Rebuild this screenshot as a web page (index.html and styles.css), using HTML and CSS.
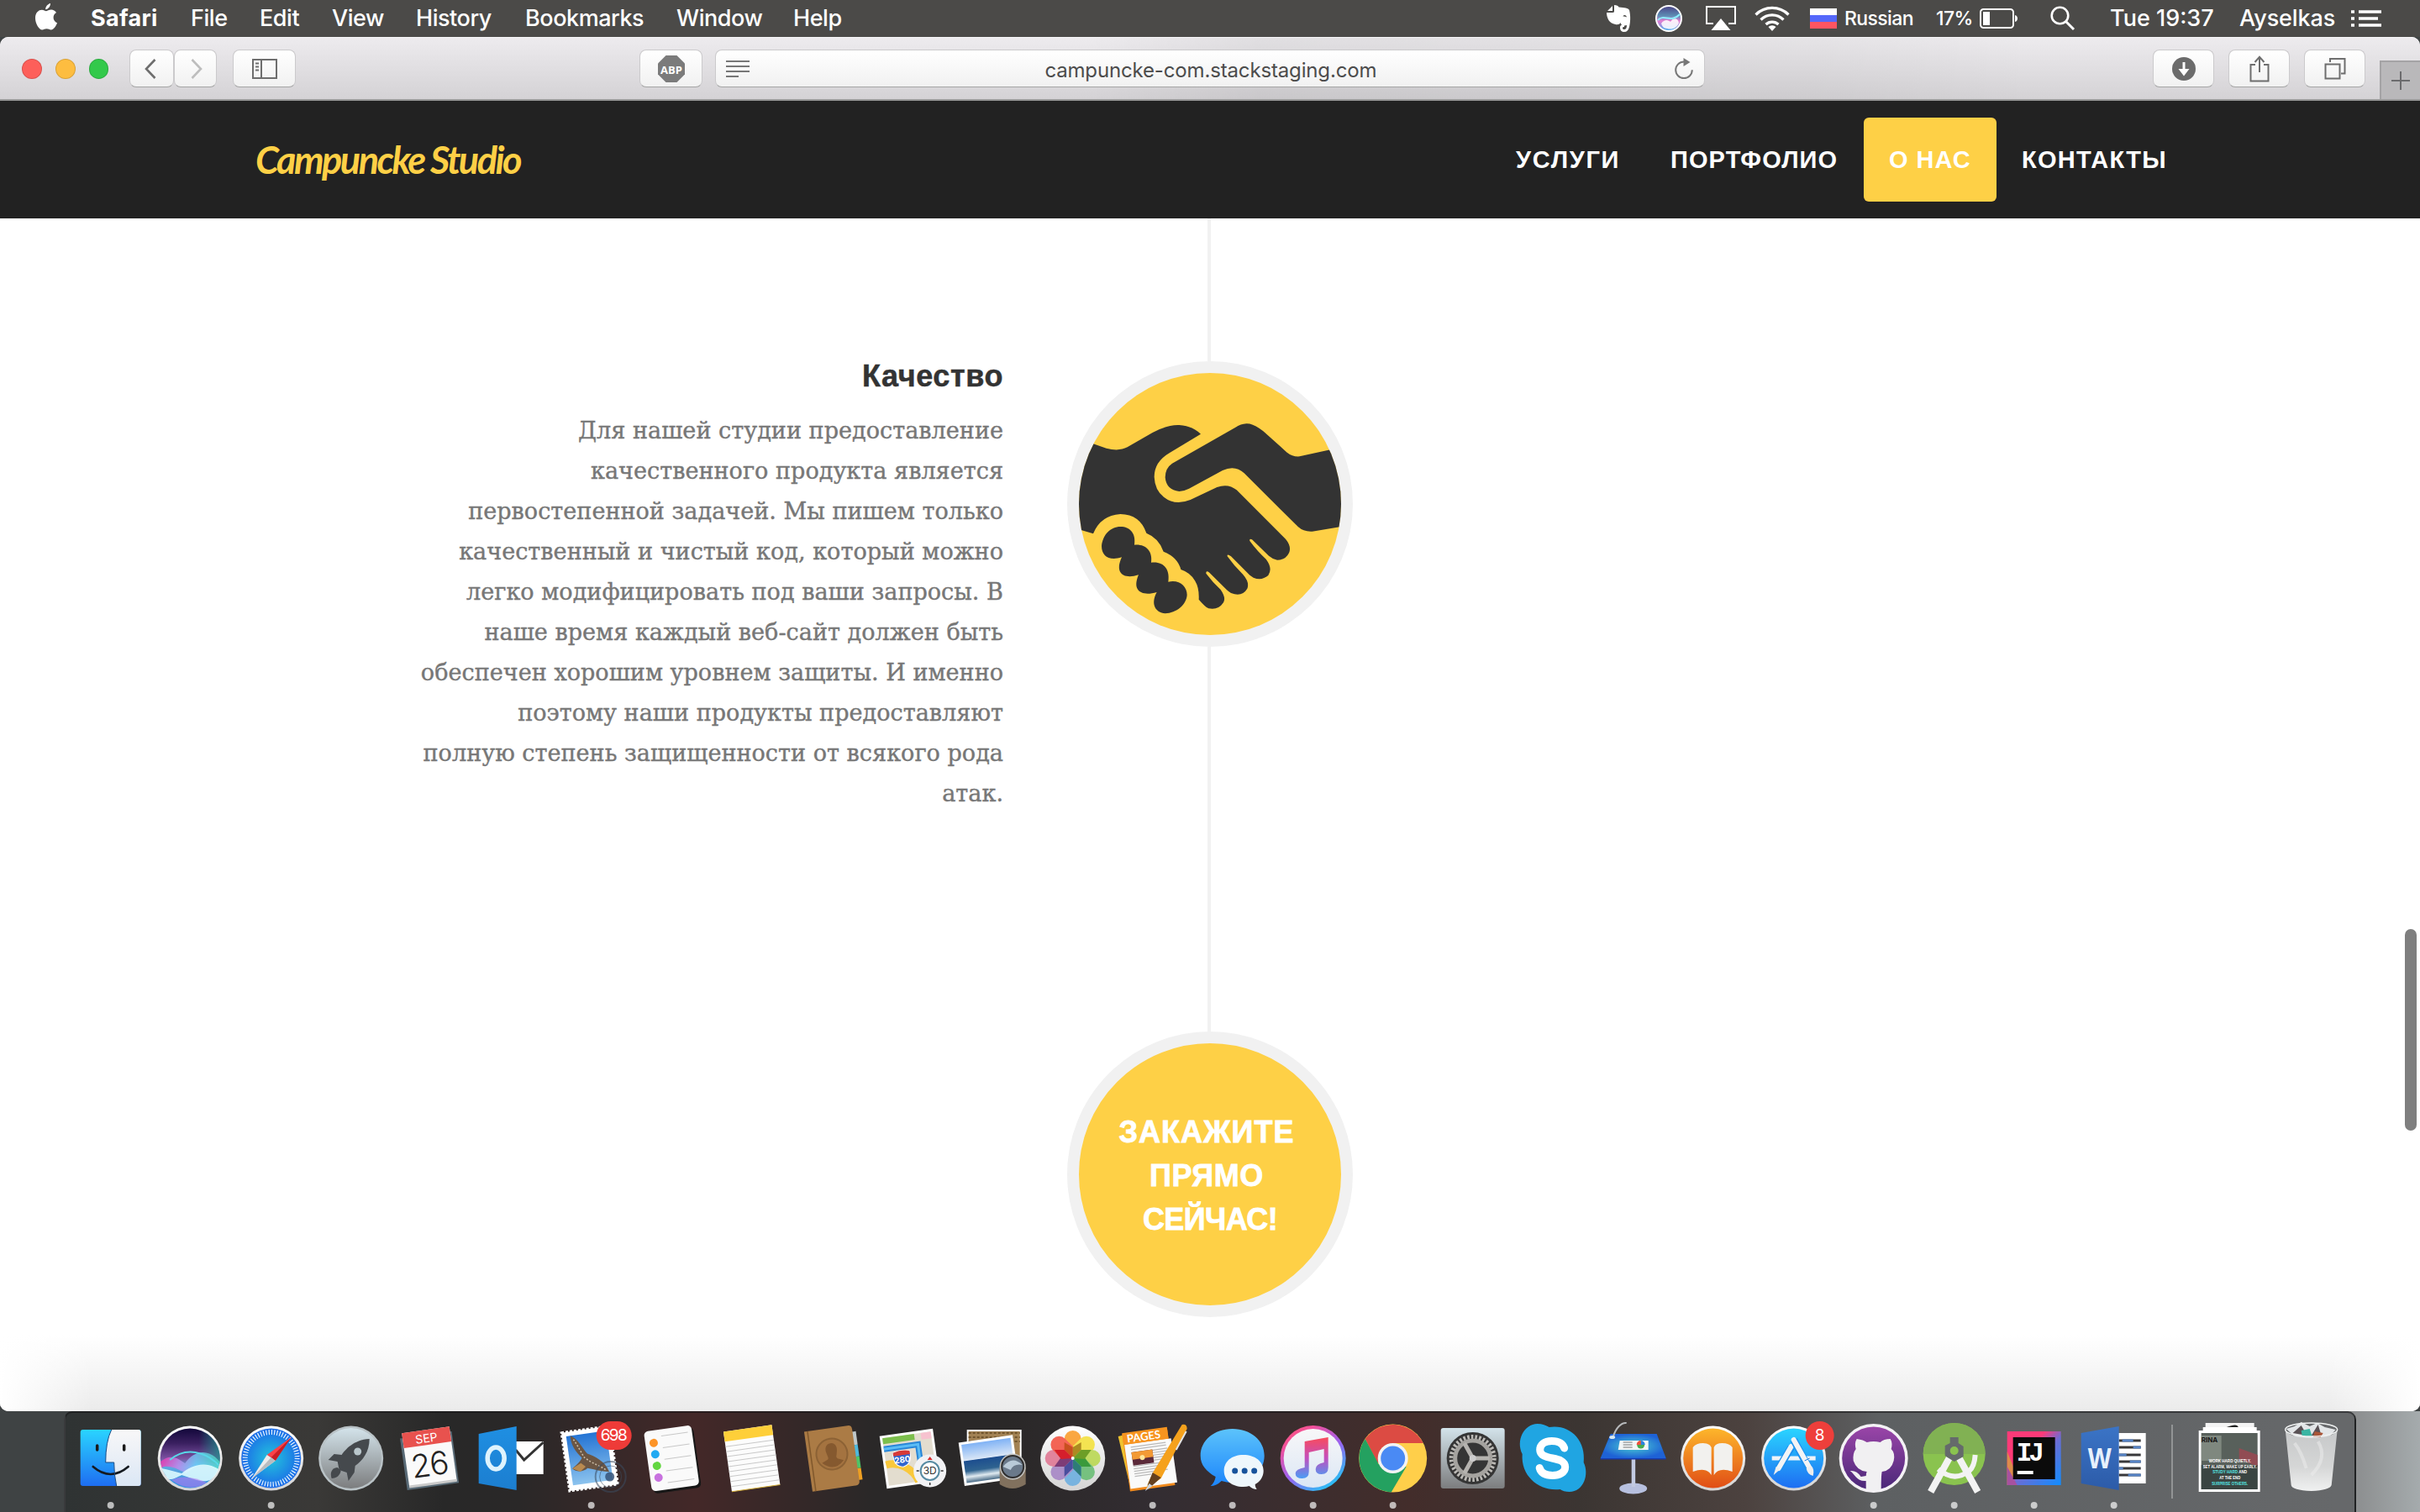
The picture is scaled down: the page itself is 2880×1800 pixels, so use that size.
FILE: index.html
```html
<!DOCTYPE html>
<html lang="ru">
<head>
<meta charset="utf-8">
<title>Campuncke Studio</title>
<link rel="stylesheet" href="styles.css">
</head>
<body>
<header class="menubar">
  <svg class="apple" viewBox="0 0 26 32" width="26" height="32"><path fill="#fff" d="M18 0c.3 3-2.300 7-5.800 7.200C12 4 15 .6 18 0zM13 9.200c1.600 0 3.300-1.600 6-1.600 2.300 0 4.700 1.300 6 3.400-5 3-4.300 10 1 12.200-1.200 3.600-4.200 8.300-7.200 8.300-2 0-2.900-1.200-5.300-1.200-2.400 0-3.400 1.200-5.300 1.200C4.500 31.500 0 24 0 17.500 0 11 4 7.700 7.800 7.700c2.300 0 4 1.500 5.200 1.500z"/></svg>
  <b class="t-safari">Safari</b><span>File</span><span>Edit</span><span>View</span><span>History</span><span>Bookmarks</span><span>Window</span><span>Help</span>
  <svg viewBox="0 0 30 32" width="30" height="32"><path fill="#fff" d="M7 1v6H1zM9 0c3 0 5 1 5.500 2.500C21 3 26 3.500 27 6c2 8 1 16 0 20-1 4-3 6-6 6s-5-2-5-5 2-4 5-4v3c-1.500 0-2 .5-2 1.500s1 1.500 2 1.500c2 0 3-2 3-5-3 1-7 .5-7.500-3-1 2-3 2.500-6 2C3 22 0 15 0 9h7c2 0 2-1 2-2z"/><path fill="#4b4a48" d="M19.500 13.500c1-2 3.500-2 4.500 1-1.500-.7-3-.7-4.500-1z"/></svg>
  <svg viewBox="-17 -17 34 34" width="34" height="34"><defs><linearGradient id="siriMini" x2="0" y2="1"><stop offset="0" stop-color="#4b4185"/><stop offset=".4" stop-color="#5d8fb5"/><stop offset=".6" stop-color="#e77cd2"/><stop offset="1" stop-color="#39aef0"/></linearGradient></defs><circle r="15" fill="url(#siriMini)" stroke="#fff" stroke-width="2"/><path d="M-9 6C-5 0 0 2 2 4 6-2 11 0 12 5 10 11 4 14-2 12-6 12-8 9-9 6z" fill="#fff" opacity=".85"/><path d="M-13 2C-6-6 3 6 13-5" stroke="#8df0ff" fill="none" stroke-width="2"/></svg>
  <svg viewBox="0 0 36 30" width="36" height="30"><path d="M9 21H1V1h34v20h-8" fill="none" stroke="#fff" stroke-width="2"/><path d="M18 15l11.500 14h-23z" fill="#fff"/></svg>
  <svg viewBox="0 0 42 30" width="42" height="30"><g fill="none" stroke="#fff" stroke-width="3.200"><path d="M1.500 10.500a27.500 27.500 0 0 1 39 0"/><path d="M7.500 16.500a19 19 0 0 1 27 0"/><path d="M13.500 22a11 11 0 0 1 15 0"/></g><path d="M21 30l-4.500-5a6.500 6.500 0 0 1 9 0z" fill="#fff"/></svg>
  <span class="flag"></span>
  <span class="t-sm t-lang">Russian</span><span class="t-sm t-pct">17%</span>
  <svg viewBox="0 0 46 24" width="46" height="24"><rect x="1" y="1" width="39" height="22" rx="3.500" fill="none" stroke="#fff" stroke-width="2"/><rect x="4" y="4" width="8" height="16" fill="#fff"/><path d="M42 8c4 1 4 7 0 8z" fill="#fff"/></svg>
  <svg viewBox="0 0 30 30" width="30" height="30"><circle cx="11.500" cy="11.500" r="9.800" fill="none" stroke="#fff" stroke-width="2.600"/><path d="M18.500 18.500L28 28" stroke="#fff" stroke-width="3"/></svg>
  <span class="t-clock">Tue 19:37</span><span class="t-user">Ayselkas</span>
  <svg viewBox="0 0 36 20" width="36" height="20"><path d="M0 2h4M9 2h27M0 10h4M9 10h23M0 18h4M9 18h27" stroke="#fff" stroke-width="3.600"/></svg>
</header>

<main class="window">
  <div class="toolbar">
    <i class="light red"></i><i class="light amber"></i><i class="light green"></i>
    <div class="btn back"><svg viewBox="0 0 14 24" width="14" height="24"><path d="M12.500 1L2 12l10.500 11" fill="none" stroke="#6e6e6e" stroke-width="2.600"/></svg></div>
    <div class="btn fwd"><svg viewBox="0 0 14 24" width="14" height="24"><path d="M1.500 1L12 12 1.500 23" fill="none" stroke="#bdbdbd" stroke-width="2.600"/></svg></div>
    <div class="btn side"><svg viewBox="0 0 30 24" width="30" height="24"><path d="M1 1h28v22H1zM11 1v22" fill="none" stroke="#6e6e6e" stroke-width="2"/><path d="M4 5.500h4M4 9.500h4M4 13.500h4" stroke="#6e6e6e" stroke-width="1.800"/></svg></div>
    <div class="btn abp"><svg viewBox="0 0 32 32" width="32" height="32"><path d="M9.500 0h13L32 9.500v13L22.500 32h-13L0 22.500v-13z" fill="#7b7b7b"/><text x="16" y="21.500" text-anchor="middle" class="abp-text">ABP</text></svg></div>
    <div class="address">
      <svg viewBox="0 0 28 20" width="28" height="20"><path d="M0 1h28M0 7h28M0 13h28M0 19h15" stroke="#777" stroke-width="2"/></svg>
      <span class="url">campuncke-com.stackstaging.com</span>
      <svg viewBox="0 0 24 26" width="24" height="26"><path d="M12 4.500a9.800 9.800 0 1 0 9.800 9.800" fill="none" stroke="#777" stroke-width="2"/><path d="M11.500 0l8 5-8 5z" fill="#777"/></svg>
    </div>
    <div class="btn down"><svg viewBox="0 0 28 28" width="28" height="28"><circle cx="14" cy="14" r="14" fill="#6b6b6b"/><path d="M12.500 6h3v8h5L14 22.500 7.500 14h5z" fill="#fff"/></svg></div>
    <div class="btn share"><svg viewBox="0 0 24 32" width="24" height="32"><path d="M7 11H1.500v19.500h21V11H17M12 20V2M6.500 8L12 1.800 17.500 8" fill="none" stroke="#6e6e6e" stroke-width="2"/></svg></div>
    <div class="btn tabs"><svg viewBox="0 0 26 26" width="26" height="26"><path d="M7 5V1h17.500v17.500H20M1.500 7.500h17v17h-17z" fill="none" stroke="#6e6e6e" stroke-width="2"/></svg></div>
    <div class="newtab"><svg viewBox="0 0 22 22" width="22" height="22"><path d="M11 0v22M0 11h22" stroke="#6b6b6d" stroke-width="2"/></svg></div>
  </div>

  <nav class="sitenav">
    <a class="brand">Campuncke Studio</a>
    <a class="link services">УСЛУГИ</a><a class="link portfolio">ПОРТФОЛИО</a><a class="link active">О НАС</a><a class="link contacts">КОНТАКТЫ</a>
  </nav>

  <section class="timeline">
    <article class="copy">
      <h4>Качество</h4>
      <p>Для нашей студии предоставление<br>качественного продукта является<br>первостепенной задачей. Мы пишем только<br>качественный и чистый код, который можно<br>легко модифицировать под ваши запросы. В<br>наше время каждый веб-сайт должен быть<br>обеспечен хорошим уровнем защиты. И именно<br>поэтому наши продукты предоставляют<br>полную степень защищенности от всякого рода<br>атак.</p>
    </article>
    <div class="axis">
      <div class="stem stem-top"></div>
      <svg class="badge" viewBox="60 60 1020 1020" width="340" height="340">
        <defs><clipPath id="disc"><circle cx="570" cy="570" r="468"/></clipPath></defs>
        <circle cx="570" cy="570" r="510" fill="#f1f1f1"/><circle cx="570" cy="570" r="468" fill="#fed046"/>
        <g clip-path="url(#disc)" fill="#333">
          <path d="M100 340L153 355 200 371Q245 383 275 367L365 315Q420 286 460 288 505 290 537 320L425 388Q371 420 371 473 373 520 405 545 445 577 500 555L595 510Q635 495 665 520L840 695Q862 722 852 745 840 770 810 770 795 768 780 755L720 697Q710 692 712 702 740 740 770 767 795 800 778 825 755 845 725 833L712 824 645 757Q630 746 632 757 655 790 688 822 712 850 703 872 685 903 645 888 635 882 630 877L568 815Q555 805 556 818 580 850 608 876 628 905 618 922 600 950 565 943 555 940 530 911 532 870 517 845 500 815 466 804 455 760 404 740 388 692 343 674 320 607 250 606 180 610 153 676L100 660Z"/>
          <path d="M1045 366L890 400Q865 402 845 386L760 310Q725 282 700 283 680 284 660 297L435 425Q410 442 410 475 414 520 460 525 480 523 495 515L615 450Q660 430 692 460L885 652Q905 670 935 668L1045 650Z"/>
          <path d="M250 651C285 651 306 675 300 716 340 712 366 738 360 779 405 774 428 803 421 848 460 839 488 863 488 895 486 930 450 960 410 961 375 958 357 927 380 885C330 900 289 884 315 823 265 840 227 820 255 760 210 775 183 755 183 720 187 680 215 651 250 651Z"/>
        </g>
      </svg>
      <div class="stem stem-mid"></div>
      <div class="cta"><span class="l1">ЗАКАЖИТЕ</span><span class="l2">ПРЯМО</span><span class="l3">СЕЙЧАС!</span></div>
    </div>
    <div class="scroll"></div>
    <div class="shade"></div>
  </section>
</main>

<footer class="desktop">
<svg class="defs" width="0" height="0"><defs>
  <linearGradient id="gBlue" x2="0" y2="1"><stop offset="0" stop-color="#2ad4ff"/><stop offset="1" stop-color="#1e6ef2"/></linearGradient>
  <linearGradient id="gFace" x2="0" y2="1"><stop offset="0" stop-color="#f8f7f8"/><stop offset="1" stop-color="#dbe7f5"/></linearGradient>
  <linearGradient id="gSiri" x2="0" y2="1"><stop offset="0" stop-color="#12073a"/><stop offset=".25" stop-color="#3a2060"/><stop offset=".5" stop-color="#7a50a0"/><stop offset=".65" stop-color="#5fa8e0"/><stop offset="1" stop-color="#2e8fe0"/></linearGradient>
  <linearGradient id="gTeal"><stop offset=".3" stop-color="#1e8f8a" stop-opacity="0"/><stop offset="1" stop-color="#1e8f8a" stop-opacity=".8"/></linearGradient>
  <linearGradient id="gWave"><stop offset="0" stop-color="#ff2fae"/><stop offset=".3" stop-color="#c98af0"/><stop offset=".6" stop-color="#6fd8ff"/><stop offset="1" stop-color="#4fe0c8"/></linearGradient>
  <linearGradient id="gRing" x2="0" y2="1"><stop offset="0" stop-color="#fff"/><stop offset="1" stop-color="#d4d4d4"/></linearGradient>
  <radialGradient id="gCompass"><stop offset="0" stop-color="#23c5dc"/><stop offset="1" stop-color="#1b6be8"/></radialGradient>
  <linearGradient id="gSteel" x2="0" y2="1"><stop offset="0" stop-color="#d3e3ea"/><stop offset="1" stop-color="#7c7d7e"/></linearGradient>
  <linearGradient id="gOut" x2="0" y2="1"><stop offset="0" stop-color="#1f8fe2"/><stop offset="1" stop-color="#1c7ed0"/></linearGradient>
  <linearGradient id="gSky" x2="0" y2="1"><stop offset="0" stop-color="#2474d4"/><stop offset="1" stop-color="#8cc3ee"/></linearGradient>
  <linearGradient id="gSea" x2="0" y2="1"><stop offset="0" stop-color="#7fb2f5"/><stop offset=".42" stop-color="#d9e6f6"/><stop offset=".44" stop-color="#1d4e8f"/><stop offset=".7" stop-color="#2f6390"/><stop offset=".85" stop-color="#e0eaf0"/><stop offset="1" stop-color="#486a86"/></linearGradient>
  <linearGradient id="gMsg" x2="0" y2="1"><stop offset="0" stop-color="#5cc3fb"/><stop offset="1" stop-color="#1c85fb"/></linearGradient>
  <linearGradient id="gTunes" x2=".7" y2="1"><stop offset="0" stop-color="#fb5b6b"/><stop offset=".25" stop-color="#f2509c"/><stop offset=".6" stop-color="#9a62f0"/><stop offset="1" stop-color="#25c3f5"/></linearGradient>
  <linearGradient id="gNote" x2="0" y2="1"><stop offset="0" stop-color="#f94b5b"/><stop offset=".5" stop-color="#c44fbd"/><stop offset="1" stop-color="#4a9cf5"/></linearGradient>
  <linearGradient id="gBook" x2="0" y2="1"><stop offset="0" stop-color="#fdb62b"/><stop offset="1" stop-color="#e04d16"/></linearGradient>
  <linearGradient id="gGit" x2="0" y2="1"><stop offset="0" stop-color="#9a45a8"/><stop offset="1" stop-color="#4a2878"/></linearGradient>
  <linearGradient id="gWord" x2="0" y2="1"><stop offset="0" stop-color="#3b74c6"/><stop offset="1" stop-color="#2c5ba8"/></linearGradient>
  <linearGradient id="gIj" x2="1" y2="1"><stop offset="0" stop-color="#fd3a78"/><stop offset=".35" stop-color="#fd3a78"/><stop offset=".55" stop-color="#6b6dd5"/><stop offset="1" stop-color="#0f8dff"/></linearGradient>
  <linearGradient id="gBin" x2="0" y2="1"><stop offset="0" stop-color="#c6c8c9"/><stop offset=".6" stop-color="#d5d6d6"/><stop offset="1" stop-color="#f0f1f1"/></linearGradient>
  <radialGradient id="gDesk"><stop offset="0" stop-color="#4bd0d2"/><stop offset="1" stop-color="#1e62d6"/></radialGradient>
</defs></svg>
<div class="dock">
  <svg class="app" viewBox="-47.680 -56 95.360 120"><rect x="-36" y="-34" width="72" height="67" rx="3" fill="url(#gBlue)"/><path d="M1-34h32a3 3 0 0 1 3 3v61a3 3 0 0 1-3 3H7Q4 20 4 5H-6Q-6-20 1-34z" fill="url(#gFace)"/><path d="M-16-15v5M16-15v5" stroke="#1a1a1a" stroke-width="3.500" stroke-linecap="round"/><path d="M-21 10Q0 28 21 10" fill="none" stroke="#151a20" stroke-width="2.600" stroke-linecap="round"/><path d="M1-34Q-6-20-6 5H4q0 15 3 28" fill="none" stroke="#174a86" stroke-width="1"/><circle cy="56" r="4" class="run"/></svg>
  <svg class="app" viewBox="-47.680 -56 95.360 120"><g transform="translate(-1.500 0)"><circle r="38.500" fill="url(#gRing)"/><circle r="35.500" fill="url(#gSiri)"/><path d="M0-35.500A35.500 35.500 0 0 1 35 7L0 0z" fill="url(#gTeal)"/><path d="M-35 4C-24-6-14 0-6 6 8-14 26-8 35 4 34 10 34 12 32 15 18 4 8 8-5 18-18 10-28 8-34 11z" fill="url(#gWave)" opacity=".75"/><path d="M-34 12C-24 14-18 16-10 18 0 10 16 2 34 13 32 19 28 23 24 26 12 30 4 24-10 20-18 24-26 28-28 22z" fill="#e4ffff" opacity=".85"/><path d="M-22 26C-10 20 4 22 20 29Q0 42-22 26z" fill="#b27af0" opacity=".6"/><path d="M-24 2C-5-14 18-8 34 8" stroke="#58d8e8" stroke-width="2" fill="none"/></g></svg>
  <svg class="app" viewBox="-47.680 -56 95.360 120"><circle r="38.500" fill="url(#gRing)"/><circle r="35.500" fill="url(#gCompass)"/><circle r="31" fill="none" stroke="#e6f2ff" stroke-width="6" stroke-dasharray="1.200 2.046"/><path d="M24-25L5 3-5-4z" fill="#fb4248"/><path d="M24-25L5 3 0-1z" fill="#c81e26"/><path d="M-23 24L-5-4 5 3z" fill="#ececec"/><path d="M-23 24L0-1 5 3z" fill="#b9bcc0"/><circle cy="56" r="4" class="run"/></svg>
  <svg class="app" viewBox="-47.680 -56 95.360 120"><circle r="38.500" fill="#b9c2c6"/><circle r="36" fill="url(#gSteel)"/><path d="M22-23C3-22-7-10-11-4L-20-5-27 2-16 4-14 14-5 17-3 27 4 17 5 9C14 3 22-8 22-23z" fill="#45494d"/><path d="M-16 11C-24 12-25 18-23 24-17 24-13 20-12 15z" fill="#45494d"/><circle cx="8" cy="-8" r="4.500" fill="#b9c6cb"/></svg>
  <svg class="app" viewBox="-47.680 -56 95.360 120"><g transform="translate(-3 0) rotate(-8)"><path d="M-31-28h62v62h-62z" fill="#586a76"/><path d="M-28-34h57v65h-57z" fill="#fafafa"/><path d="M-28-34h57v18h-57z" fill="#e8524e"/><text y="-19" text-anchor="middle" class="cal-m">SEP</text><text y="21" text-anchor="middle" class="cal-d" textLength="45">26</text><path d="M-28 29h57v3h-57z" fill="#c9c9c9"/></g></svg>
  <svg class="app" viewBox="-47.680 -56 95.360 120"><path d="M0-20h38v39H0z" fill="#fff"/><path d="M5-10L15 2 38-19" stroke="#333" stroke-width="3" fill="none"/><path d="M-39-29L6-38V38l-45-8z" fill="url(#gOut)"/><ellipse cx="-18.500" rx="10" ry="13" fill="none" stroke="#def3fd" stroke-width="5.500"/></svg>
  <svg class="app" viewBox="-47.680 -56 95.360 120"><g transform="rotate(-8)"><path d="M-31-35h58v70h-58z" fill="#fff" stroke="#fff" stroke-width="3" stroke-dasharray="3 2"/><path d="M-26-30h48v59h-48z" fill="url(#gSky)"/><path d="M-21-30C-13-26-9-14-4-6 4-2 16 6 19 19 10 17 2 14-6 11-12 15-20 14-24 9-18 5-14 3-11-2-18-11-22-20-21-30z" fill="#6b5644"/><path d="M-18-25C-14-18-11-8-8-2 1 7 9 10 15 16" stroke="#cdbfa9" stroke-width="1.500" stroke-dasharray="2 2" fill="none"/><path d="M-24 9l11-5 5 5-7 5z" fill="#b98a50"/></g><g fill="none" stroke="#3b4c60" opacity=".55"><circle cx="23" cy="22" r="18" stroke-width="2"/><circle cx="23" cy="22" r="13"/></g><circle cx="22" cy="22" r="5.500" fill="#2f4c72" opacity=".8"/><rect x="6" y="-44" width="42" height="34" rx="17" fill="#ee3b38"/><text x="27" y="-21" text-anchor="middle" class="count" textLength="32">698</text><circle cy="56" r="4" class="run"/></svg>
  <svg class="app" viewBox="-47.680 -56 95.360 120"><g transform="rotate(-8)"><rect x="-27" y="-33" width="57" height="72" rx="5" fill="#171717"/><rect x="-29" y="-36" width="57" height="72" rx="5" fill="#fafafa"/><path d="M-9-28h32M-9-14h32M-9 0h32M-9 14h32M-9 28h32" stroke="#c8c8c8" stroke-width="1"/><g><circle cx="-19" cy="-21" r="5" fill="#fd9427"/><circle cx="-19" cy="-7.500" r="5" fill="#22aaf2"/><circle cx="-19" cy="6.500" r="5" fill="#63d641"/><circle cx="-19" cy="20.500" r="5" fill="#c872df"/></g></g></svg>
  <svg class="app" viewBox="-47.680 -56 95.360 120"><g transform="rotate(-8)"><path d="M-29-36h58v72h-58z" fill="#fcfcfc"/><path d="M-29-36h58v12h-58z" fill="#fecf39"/><path d="M-29-18h58M-29-12h58M-29-6h58M-29 0h58M-29 6h58M-29 12h58M-29 18h58M-29 24h58M-29 30h58" stroke="#c9c9c9"/><path d="M-29 36h58" stroke="#d0ab38"/></g></svg>
  <svg class="app" viewBox="-47.680 -56 95.360 120"><g transform="rotate(-8)"><path d="M25-28h7v16h-7z" fill="#bfc7c8"/><path d="M25-12h7V2h-7z" fill="#4eb9dd"/><path d="M25 2h7v14h-7z" fill="#4fc467"/><path d="M25 16h7v14h-7z" fill="#efa022"/><path d="M-29-36h52q5 0 5 5v62q0 5-5 5h-52z" fill="#ab7b45"/><path d="M-25-36v72" stroke="#80582c" stroke-width="1.500"/><circle cy="-5" r="18.500" fill="#a47340" stroke="#8c6235" stroke-width="2"/><path d="M0-18c6 0 8 6 6 12-1 5-2 5 0 7l7 3Q0 17-13 4l7-3c2-2 1-2 0-7-2-6 0-12 6-12z" fill="#85592f"/></g></svg>
  <svg class="app" viewBox="-47.680 -56 95.360 120"><g transform="translate(-3 0) rotate(-8)"><path d="M-32-31h64v63h-64z" fill="#fff"/><path d="M-29-28h58v57h-58z" fill="#e3ddcf"/><path d="M-29-28h38v7h-38z" fill="#7cbf4c"/><path d="M17-28h12v8H17z" fill="#f7c2cf"/><path d="M-29-15h41v30" stroke="#2886d8" stroke-width="7" fill="none"/><path d="M-29-15h41v30" stroke="#5bbcf5" stroke-width="3" fill="none"/><path d="M-29 4C-14 2 2 12 7 29" stroke="#f9c83c" stroke-width="9" fill="none"/><path d="M-19-9Q-9-12 1-9 3 7-9 9-21 7-19-9z" fill="#3065cf" stroke="#fff"/><path d="M-19-9Q-9-12 1-9v4h-20z" fill="#d73937"/><text x="-9" y="4" text-anchor="middle" class="route">280</text></g><circle cx="21" cy="15" r="19.500" fill="#f2f2f4"/><circle cx="21" cy="15" r="11" fill="#fff" stroke="#568ba2" stroke-width="2"/><path d="M21-2l3 4h-6z" fill="#d92b2b"/><path d="M5 15h3M34 15h3M21 29v3" stroke="#333" stroke-width="1.500"/><text x="21" y="19" text-anchor="middle" class="three">3D</text></svg>
  <svg class="app" viewBox="-47.680 -56 95.360 120"><path d="M-30-34h65v50h-65z" fill="#fff"/><path d="M-28-32h61v46h-61z" fill="#a28254"/><path d="M-28-30h61M-28-25h61M-28-20h61" stroke="#71562f" stroke-dasharray="3 2" stroke-width="2"/><g transform="rotate(-8)"><path d="M-37-24h65v52h-65z" fill="#fff"/><path d="M-34-21h59v46h-59z" fill="url(#gSea)"/></g><path d="M9 11v20q15 10 31 0V11z" fill="#81715e"/><circle cx="24.500" cy="10" r="15.500" fill="#c3c3c0"/><circle cx="24.500" cy="10" r="13" fill="#6a798a" stroke="#2f2f2f" stroke-width="2"/><path d="M13 10Q24-4 36 8q-10-2-14 6z" fill="#b9cad8"/></svg>
  <svg class="app" viewBox="-47.680 -56 95.360 120"><circle r="38.500" fill="url(#gRing)"/><g opacity=".87"><rect x="-10" y="-33" width="20" height="33" rx="10" fill="#fb9b27"/><rect x="-10" y="-33" width="20" height="33" rx="10" fill="#f4e13a" transform="rotate(45)"/><rect x="-10" y="-33" width="20" height="33" rx="10" fill="#b9d84e" transform="rotate(90)"/><rect x="-10" y="-33" width="20" height="33" rx="10" fill="#67bd72" transform="rotate(135)"/><rect x="-10" y="-33" width="20" height="33" rx="10" fill="#6aaee0" transform="rotate(180)"/><rect x="-10" y="-33" width="20" height="33" rx="10" fill="#a584c5" transform="rotate(225)"/><rect x="-10" y="-33" width="20" height="33" rx="10" fill="#e07592" transform="rotate(270)"/><rect x="-10" y="-33" width="20" height="33" rx="10" fill="#f3503f" transform="rotate(315)"/></g><g><path d="M0 0l-10-10v-9l10 6z" fill="#c8501f"/><path d="M0 0l10-10v-9L0-13z" fill="#ad8a22"/><path d="M0 0l14-1 8 11H10z" fill="#3a9a3b"/><path d="M0 0l10 10v12L0 12z" fill="#2e7c78"/><path d="M0 0l-10 10v12L0 12z" fill="#4a4e9d"/><path d="M0 0l-14-1-8 11h12z" fill="#7e3c77"/><path d="M0 0l-14 1-8-11h12z" fill="#d51f2c"/><path d="M0 0l14 1 8-11H10z" fill="#6d9e27"/></g><circle r="2" fill="#fff"/></svg>
  <svg class="app" viewBox="-47.680 -56 95.360 120"><path d="M-41-26l8-2 12 63-5 2z" fill="#f0c22e"/><g transform="translate(-4 0) rotate(-8)"><path d="M-28-33h54v69h-54z" fill="#f08a1d"/><path d="M-27-20h56v53h-56z" fill="#fafafa"/><path d="M-28-34h54v14h-54z" fill="#f7941f"/><text x="-3" y="-22" text-anchor="middle" class="pages">PAGES</text><path d="M-20-16h42M-20-13h42M4-9h19M4-6h19M4-3h19M4 0h19M4 3h19M-20 7h42M-20 10h42M-20 13h36M-20 16h40M-20 19h20" stroke="#b9b9b9" stroke-width="1.200"/><path d="M-20-10H5V6h-25z" fill="#5b2a3a"/><path d="M-20-10H5v9h-25z" fill="#f39a35"/><circle cx="-8" cy="-2" r="3" fill="#ffe69a"/></g><path d="M35-40q6-1 6 5L10 24-3 33-8 38-5 29 1 16z" fill="#f5a11c"/><path d="M0 17l10 6-12 11-4-2z" fill="#65401f"/><path d="M40-32L28-10" stroke="#e5e5e5" stroke-width="2"/><path d="M-9 39l5-9 4 3z" fill="#ccd5df"/><circle cy="56" r="4" class="run"/></svg>
  <svg class="app" viewBox="-47.680 -56 95.360 120"><path d="M0-35C22-35 38-21 38-3S22 29 0 29q-7 0-13-2-6 6-13 6 5-4 6-11C-31 16-38 8-38-3-38-21-22-35 0-35z" fill="url(#gMsg)"/><path d="M13-4c14 0 24 8 24 19 0 7-4 13-10 16 0 3 1 4 2 6q-5 0-9-4-3 1-7 1c-14 0-23-8-23-19S-1-4 13-4z" fill="#eff7fc"/><g fill="#18539c"><circle cx="3" cy="15" r="3.500"/><circle cx="14.500" cy="15" r="3.500"/><circle cx="26" cy="15" r="3.500"/></g><circle cy="56" r="4" class="run"/></svg>
  <svg class="app" viewBox="-47.680 -56 95.360 120"><circle r="39" fill="url(#gTunes)"/><circle r="35" fill="url(#gFace)"/><path d="M-10-20L18-25V11q0 8-8 8-7 0-7-6t10-8v-16l-18 4v23q0 8-8 8-8 0-8-6 0-5 11-7z" fill="url(#gNote)"/><circle cy="56" r="4" class="run"/></svg>
  <svg class="app" viewBox="-47.680 -56 95.360 120"><circle r="40.500" fill="#ffcf4a"/><path d="M-33-23A40.500 40.500 0 0 1 36-18H0L-18 6z" fill="#dc4b43"/><path d="M-33-23A40.500 40.500 0 0 0-2 40.500L16 10-17 7z" fill="#24a160"/><circle r="18" fill="#f3f3f3"/><circle r="14.500" fill="#4a8af4"/><circle cy="56" r="4" class="run"/></svg>
  <svg class="app" viewBox="-47.680 -56 95.360 120"><rect x="-38" y="-36" width="76" height="72" rx="3" fill="url(#gSteel)"/><circle r="31" fill="#353535"/><circle r="25.500" fill="none" stroke="#bcbab6" stroke-width="5" stroke-dasharray="2.600 2.100"/><circle r="21" fill="none" stroke="#a5a39f" stroke-width="5"/><path d="M0 0h20M0 0l-10-18M0 0l-10 18" stroke="#b5b3af" stroke-width="5"/><circle r="4" fill="#ccc"/></svg>
  <svg class="app" viewBox="-46.680 -56 95.360 120"><path d="M-18-41c6 0 10 2 14 4C20-41 40-22 37 5c7 14 0 35-17 35q-7 0-11-3C-15 40-38 22-36-5-44-21-34-41-18-41z" fill="#20a5e2"/><path d="M14-12C12-18 6-20.500-1-20.500-10-20.500-15-16-15-10-15 4 15-4 15 10.500 15 17 8 20.500 0 20.500-9 20.500-14 17-15.500 11.500" fill="none" stroke="#fff" stroke-width="9" stroke-linecap="round"/></svg>
  <svg class="app" viewBox="-47.680 -56 95.360 120"><ellipse cy="36" rx="16.500" ry="6.500" fill="#b7c0df"/><path d="M-2 0h4.500v34H-2z" fill="#c2cae2"/><path d="M-27-29h55L39 0h-78z" fill="url(#gDesk)"/><path d="M-39 0h78v1.500h-78z" fill="#173bb0"/><path d="M-16-21h34v11h-36z" fill="#f2f5f6"/><path d="M-12-19h11M-12-16h11M-12-13h11" stroke="#777"/><circle cx="9" cy="-16" r="4.500" fill="#45ab50"/><path d="M9-16v-5a5 5 0 0 1 5 5z" fill="#2b82e0"/><path d="M9-16v-5a5 5 0 0 0-5 5z" fill="#f1503d"/><path d="M-24-25C-21-36-14-43-8-42" stroke="#b7b9bb" stroke-width="2" fill="none"/><ellipse cx="-25" cy="-25" rx="3.500" ry="2" fill="#d8e8f0"/></svg>
  <svg class="app" viewBox="-46.680 -56 95.360 120"><circle r="38.500" fill="url(#gRing)"/><circle r="35.500" fill="url(#gBook)"/><path d="M-2 20V-13Q-4-18-12-18-20-18-24-13V16Q-8 10-2 20zM1 20V-13Q3-18 11-18 19-18 23-13V16Q7 10 1 20z" fill="#f2f1ee"/></svg>
  <svg class="app" viewBox="-47.680 -56 95.360 120"><circle r="38.500" fill="url(#gRing)"/><circle r="35.500" fill="url(#gBlue)"/><path d="M-26 0h52" stroke="#eef3f8" stroke-width="5"/><path d="M-3-13L-18 12" stroke="#1e90ee" stroke-width="9"/><path d="M-3-14L-18 12" stroke="#f2f4f6" stroke-width="6" stroke-linecap="round"/><path d="M-21 10l5 3-8 7z" fill="#eee"/><path d="M0-22L18 12" stroke="#1e90ee" stroke-width="9"/><path d="M0-22L18 10" stroke="#f2f4f6" stroke-width="6" stroke-linecap="round"/><path d="M15 12l6-3q4 4 2 12-7-2-8-9z" fill="#eee"/><path d="M13 3l6-3" stroke="#1e80e8"/><circle cx="31" cy="-27" r="17" fill="#ee3f3b"/><text x="31" y="-21" text-anchor="middle" class="count">8</text></svg>
  <svg class="app" viewBox="-47.680 -56 95.360 120"><circle r="41" fill="#f4f2f5"/><circle r="37.500" fill="url(#gGit)"/><path d="M-20-23q8 1 12 4Q0-21 8-19q4-4 12-4 3 5 1 12 5 5 3 14Q21 15 10 16q-1 4-1 21Q0 40-9 37V27C-20 28-22 19-28 15q8-1 13 7l6-1q0-3 1-5Q-20 15-24 3q-1-9 3-14-2-7 1-12z" fill="#f1f0f2"/><circle cy="56" r="4" class="run"/></svg>
  <svg class="app" viewBox="-47.680 -56 95.360 120"><circle cy="-5" r="37" fill="#8ac34f"/><path d="M-37-5A37 37 0 0 1 37-5z" fill="#81b153"/><path d="M-6 0L-28 40M6 0L28 40" stroke="#f3f3f3" stroke-width="8"/><path d="M-19 13Q0 29 18 15 24 10 25-4" stroke="#f3f3f3" stroke-width="6" fill="none"/><path d="M-5-25H5v7l6 4v12L0 4-11-3v-12l6-3z" fill="#656a6b"/><circle cy="-9" r="5" fill="#8ac34f"/><circle cy="56" r="4" class="run"/></svg>
  <svg class="app" viewBox="-47.680 -56 95.360 120"><path d="M-32-32h64v64h-64z" fill="url(#gIj)"/><path d="M-32-8l8 20v20h-8z" fill="#dd8b4b"/><path d="M-32 10l12 22h-12z" fill="#a751a0"/><path d="M-25-25h50v50h-50z" fill="#0b0b0b"/><text x="-21" y="3" class="ij">IJ</text><path d="M-20 15h19v4h-19z" fill="#fff"/><circle cy="56" r="4" class="run"/></svg>
  <svg class="app" viewBox="-47.680 -56 95.360 120"><path d="M0-30h38v60H0z" fill="#fff"/><path d="M6-21h26M6-13h26M6-4h26M6 4h26M6 12h26M6 20h26" stroke="#38383a" stroke-width="3"/><path d="M10-21h13M23-13h9M6-4h9M19 4h13M6 12h5M17 20h15" stroke="#5683c5" stroke-width="3"/><path d="M-39-30L6-38V38l-45-8z" fill="url(#gWord)"/><text x="-17" y="12" text-anchor="middle" class="word" textLength="28" lengthAdjust="spacingAndGlyphs">W</text><circle cy="56" r="4" class="run"/></svg>
  <i class="rule"></i>
  <svg class="app" viewBox="-47.680 -56 95.360 120"><path d="M-29-42h58v12h-58z" fill="#f4f4f4"/><path d="M-4-37q13-5 14 0z" fill="#222"/><path d="M-32-37h64v8h-64z" fill="#fff"/><path d="M-37-33h73v73h-73z" fill="#fff"/><path d="M-34-30h67v67h-67z" fill="#58605b"/><path d="M-34-27h24v30h-24z" fill="#9aa398" opacity=".6"/><path d="M11-12l22 8v14l-22-9z" fill="#914c53"/><path d="M-34 8h67v29h-67z" fill="#303c3a" opacity=".75"/><text x="-34" y="-19" class="rina">RINA</text><g class="poster"><text y="5" text-anchor="middle" textLength="50" lengthAdjust="spacingAndGlyphs">WORK HARD QUIETLY.</text><text y="11.700" text-anchor="middle" textLength="64" lengthAdjust="spacingAndGlyphs">SET ALARM, WAKE UP EARLY.</text><text y="18.400" text-anchor="middle" textLength="41" lengthAdjust="spacingAndGlyphs"><tspan fill="#54e5e2">STUDY HARD</tspan> AND</text><text y="25.100" text-anchor="middle" textLength="25" lengthAdjust="spacingAndGlyphs">AT THE END</text><text y="31.800" text-anchor="middle" textLength="43" lengthAdjust="spacingAndGlyphs" fill="#54e5e2">SURPRISE OTHERS.</text></g></svg>
  <svg class="app" viewBox="-48.680 -56 95.360 120"><path d="M-30-35L-20-38-12-43-2-38 7-42 16-37 29-34 20-24H-18z" fill="#e3e6e8"/><path d="M-22-30l10-9 7 12zM0-27l8-13 4 13z" fill="#5a5256"/><path d="M-12-33l10-2 3 9h-12z" fill="#39b5a3"/><path d="M4-32l10 2-3 5h-9z" fill="#a95638"/><path d="M-31-34L-24 32q1 6 24 7 22-1 24-7L31-34Q28-25 0-24-28-25-31-34z" fill="url(#gBin)"/><ellipse cy="-34" rx="31" ry="8" fill="none" stroke="#eef0f0" stroke-width="1.500"/><path d="M-20-18q8 10 14 30M8-20Q20 0 0 20" stroke="#eee" stroke-width="4" fill="none" opacity=".5"/></svg>
</div>
</footer>
</body>
</html>
```
FILE: styles.css
```css
* { box-sizing: border-box; }
html, body { margin: 0; width: 2880px; height: 1800px; overflow: hidden; }
body { display: flex; flex-direction: column; background: #3f4344; font-family: Inter, "Liberation Sans", sans-serif; }
svg { display: block; flex: none; }

.menubar {
  height: 44px; background: #4b4a48; color: #fff; padding-left: 42px; display: grid; align-items: center;
  grid-template-columns: 66px 119px 82px 86px 100px 130px 180px 139px 968px 57px 61px 58px 66px 43px 108px 51px 84px 71px 154px 133px 82px;
  font-size: 27px; font-weight: 500; line-height: 44px; letter-spacing: -.45px; white-space: nowrap;
}
.menubar .apple { margin-top: -4px; }
.t-sm { font-size: 23px; letter-spacing: -.6px; }
.t-lang { margin-left: -2px; }
.t-pct { margin-left: -1px; }
.t-safari { font-weight: 700; letter-spacing: .3px; }
.t-clock { letter-spacing: 0; }
.t-user { letter-spacing: -.1px; }
.flag { width: 32px; height: 24px; background: linear-gradient(#fff 0 33.300%, #5568fa 33.300% 66.600%, #fd5562 66.600%); }

.window { height: 1636px; display: flex; flex-direction: column; border-radius: 10px; overflow: hidden; background: #fff; }
.toolbar {
  height: 76px; flex: none; display: flex; align-items: center; padding-left: 26px; border-top: 1px solid #f6f5f7; border-bottom: 2px solid #999;
  background: linear-gradient(90deg, transparent 45%, rgba(0,0,0,.05) 52%, rgba(0,0,0,.03) 75%, transparent 84%), linear-gradient(#edebee, #d4d2d5);
}
.light { width: 24px; height: 24px; border-radius: 50%; margin-right: 16px; border: 1px solid rgba(0,0,0,.14); }
.red { background: #fd5f5a; } .amber { background: #fdbd40; } .green { background: #33c94b; }
.btn, .address {
  height: 45px; border-radius: 8px; background: linear-gradient(#fff, #f1f1f1); border: 1px solid #cbcacc; border-bottom-color: #a5a5a5;
  display: flex; align-items: center; justify-content: center; flex: none;
}
.btn { width: 73px; }
.back { width: 53px; margin-left: 9px; padding-right: 3px; } .fwd { width: 51px; padding-left: 2px; }
.side { width: 75px; margin-left: 19px; }
.abp { margin-left: 409px; width: 75px; }
.abp-text { font: 700 13px "Open Sans", sans-serif; fill: #fff; }
.address { width: 1178px; margin-left: 15px; padding: 0 12px; justify-content: space-between; }
.url { font-size: 24px; color: #4c4c4c; letter-spacing: -.15px; padding-top: 3px; margin-right: 3px; }
.down { margin-left: 533px; } .share { margin-left: 17px; } .tabs { margin-left: 17px; }
.newtab { width: 48px; height: 46px; margin-left: 17px; align-self: flex-end; background: #b9b8ba; border: 2px solid #a4a3a5; border-width: 2px 0 0 2px; display: flex; align-items: center; justify-content: center; }

.sitenav { height: 140px; flex: none; background: #222; padding-left: 304px; display: flex; align-items: center; white-space: nowrap; }
.brand { width: 1470px; color: #fed046; font: italic 700 45px/60px Lato, sans-serif; letter-spacing: -2.500px; }
.link { height: 100px; line-height: 100px; border-radius: 6px; color: #fff; font-family: "Liberation Sans", sans-serif; font-weight: 700; font-size: 29px; letter-spacing: 1.100px; padding-left: 30px; }
.services { width: 184px; letter-spacing: 1.700px; } .portfolio { width: 260px; } .active { width: 158px; background: #fed046; letter-spacing: 1px; } .contacts { width: 240px; letter-spacing: 1.300px; }

.timeline { position: relative; height: 1420px; display: flex; align-items: flex-start; }
.copy { width: 1194px; padding-top: 166px; text-align: right; }
h4 { margin: 0; font: 700 36px/44px "Liberation Sans", sans-serif; letter-spacing: .6px; color: #333; -webkit-text-stroke: .5px #333; }
p { margin: 19px 0 0; font: 27.100px/48px "DejaVu Serif", serif; color: #777; white-space: nowrap; -webkit-text-stroke: .4px #777; }
.axis { width: 340px; margin-left: 76px; display: flex; flex-direction: column; }
.stem { width: 4px; background: #f1f1f1; margin-left: 167px; }
.stem-top { height: 170px; }
.stem-mid { height: 458px; }
.cta { width: 340px; height: 340px; border: 14px solid #f1f1f1; border-radius: 50%; background: #fed046; color: #fff; font: 700 36px/52px "Liberation Sans", sans-serif; -webkit-text-stroke: .8px #fff; display: flex; flex-direction: column; align-items: center; padding-top: 80px; }
.l1, .l2 { margin-right: 8px; }
.l1 { letter-spacing: 1px; }
.l2 { letter-spacing: .6px; }
.l3 { letter-spacing: -.6px; }
.scroll { position: absolute; right: 4px; top: 846px; width: 14px; height: 240px; border-radius: 7px; background: #7f7f7f; }
.shade { position: absolute; left: 0; right: 0; bottom: 0; height: 90px; background: linear-gradient(90deg, #fff 0, rgba(255,255,255,0) 110px, rgba(255,255,255,0) 2770px, #fff 2880px), linear-gradient(#fff, #ebebeb); }

.desktop { height: 120px; padding-left: 76px; background: linear-gradient(90deg, #3f4344 0 76px, #3f4344 50%, #8b8d8e 2800px, #a5abad 2880px); display: flex; position: relative; }
.defs { position: absolute; }
.dock {
  width: 2728px; height: 122px; border: 2px solid rgba(20,20,22,.55); border-radius: 10px 10px 0 0; padding-left: 6.320px; display: flex;
  background: linear-gradient(90deg, #2f3333 0, #3a3937 300px, #282828 450px, #2a2828 540px, #432828 750px, #2a2828 960px, #2a2828 1120px, #332d32 1300px, #432d2b 1600px, #3b3532 1800px, #4c423f 2000px, #5d6062 2160px, #66686a 2700px);
}
.app { width: 95.360px; height: 120px; margin-top: -2px; overflow: visible; }
.run { fill: #fff; opacity: .68; }
.rule { width: 2px; height: 88px; background: #929495; margin: 14px 20.300px 0; flex: none; }
.cal-m { font: 14px Inter, sans-serif; fill: #fff; }
.cal-d { font: 300 38px Inter, sans-serif; fill: #222; }
.count { font: 19px Inter, sans-serif; fill: #fff; }
.route { font: 700 10px Inter, sans-serif; fill: #fff; }
.three { font: 12px Inter, sans-serif; fill: #333; }
.pages { font: 700 13px Lato, sans-serif; fill: #fff; }
.ij { font: 700 31px "Liberation Mono", monospace; letter-spacing: -4px; fill: #fff; }
.word { font: 700 34px "Open Sans", sans-serif; fill: #e8f1fc; }
.rina { font: 700 8px Inter, sans-serif; fill: #171717; }
.poster { font: 700 5.600px "Liberation Sans", sans-serif; fill: #fff; }
```
